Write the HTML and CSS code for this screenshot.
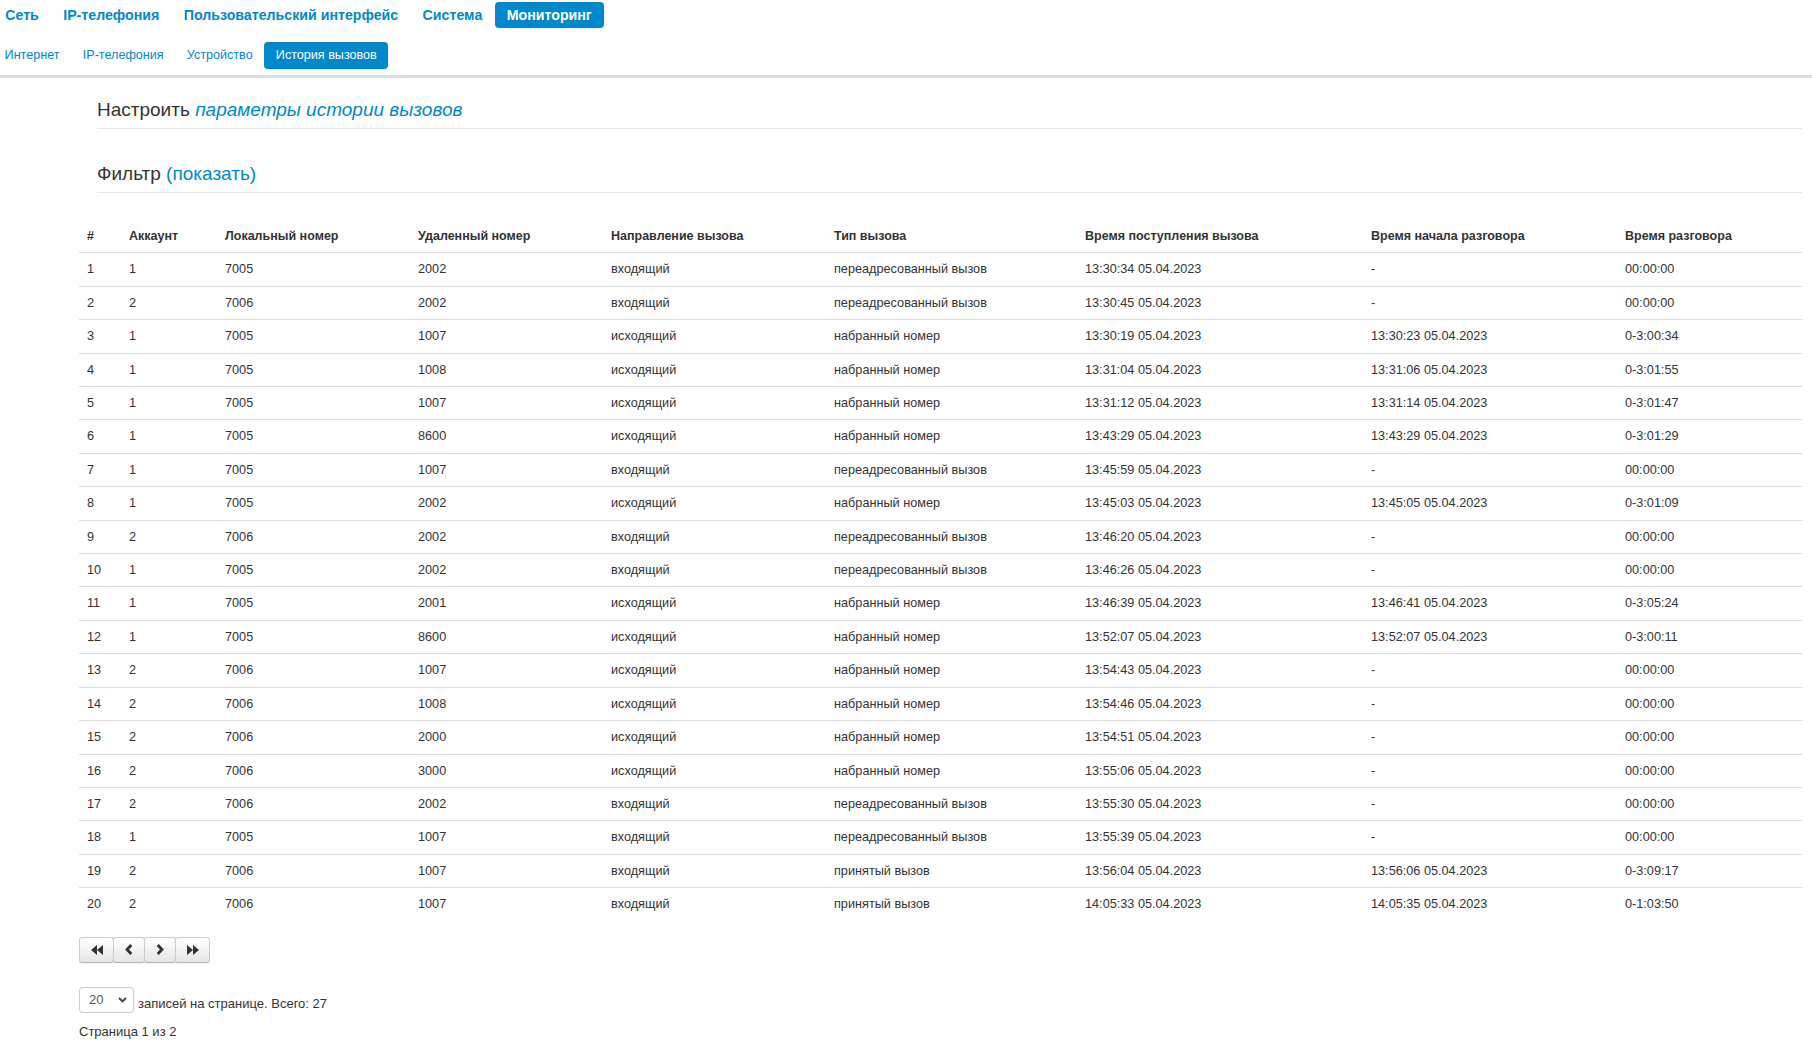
FILE: index.html
```html
<!DOCTYPE html>
<html lang="ru">
<head>
  <meta charset="utf-8" />
  <title>История вызовов</title>
  <link rel="stylesheet" href="styles.css">
</head>
<body>
  <header class="topbar">
    <ul class="nav nav-main">
      <li><a href="#">Сеть</a></li>
      <li><a href="#">IP-телефония</a></li>
      <li><a href="#">Пользовательский интерфейс</a></li>
      <li><a href="#">Система</a></li>
      <li class="active"><a href="#">Мониторинг</a></li>
    </ul>
    <ul class="nav nav-sub">
      <li><a href="#">Интернет</a></li>
      <li><a href="#">IP-телефония</a></li>
      <li><a href="#">Устройство</a></li>
      <li class="active"><a href="#">История вызовов</a></li>
    </ul>
  </header>

  <main class="content">
    <div class="legend">Настроить <a href="#" class="settings-link">параметры истории вызовов</a></div>
    <div class="legend legend-filter">Фильтр <a href="#">(показать)</a></div>

    <table class="calls">
      <colgroup>
        <col style="width:42px"><col style="width:96px"><col style="width:193px">
        <col style="width:193px"><col style="width:223px"><col style="width:251px">
        <col style="width:286px"><col style="width:254px"><col>
      </colgroup>
      <thead>
        <tr>
          <th>#</th><th>Аккаунт</th><th>Локальный номер</th><th>Удаленный номер</th>
          <th>Направление вызова</th><th>Тип вызова</th><th>Время поступления вызова</th>
          <th>Время начала разговора</th><th>Время разговора</th>
        </tr>
      </thead>
      <tbody>
        <tr><td>1</td><td>1</td><td>7005</td><td>2002</td><td>входящий</td><td>переадресованный вызов</td><td>13:30:34 05.04.2023</td><td>-</td><td>00:00:00</td></tr>
        <tr><td>2</td><td>2</td><td>7006</td><td>2002</td><td>входящий</td><td>переадресованный вызов</td><td>13:30:45 05.04.2023</td><td>-</td><td>00:00:00</td></tr>
        <tr><td>3</td><td>1</td><td>7005</td><td>1007</td><td>исходящий</td><td>набранный номер</td><td>13:30:19 05.04.2023</td><td>13:30:23 05.04.2023</td><td>0-3:00:34</td></tr>
        <tr><td>4</td><td>1</td><td>7005</td><td>1008</td><td>исходящий</td><td>набранный номер</td><td>13:31:04 05.04.2023</td><td>13:31:06 05.04.2023</td><td>0-3:01:55</td></tr>
        <tr><td>5</td><td>1</td><td>7005</td><td>1007</td><td>исходящий</td><td>набранный номер</td><td>13:31:12 05.04.2023</td><td>13:31:14 05.04.2023</td><td>0-3:01:47</td></tr>
        <tr><td>6</td><td>1</td><td>7005</td><td>8600</td><td>исходящий</td><td>набранный номер</td><td>13:43:29 05.04.2023</td><td>13:43:29 05.04.2023</td><td>0-3:01:29</td></tr>
        <tr><td>7</td><td>1</td><td>7005</td><td>1007</td><td>входящий</td><td>переадресованный вызов</td><td>13:45:59 05.04.2023</td><td>-</td><td>00:00:00</td></tr>
        <tr><td>8</td><td>1</td><td>7005</td><td>2002</td><td>исходящий</td><td>набранный номер</td><td>13:45:03 05.04.2023</td><td>13:45:05 05.04.2023</td><td>0-3:01:09</td></tr>
        <tr><td>9</td><td>2</td><td>7006</td><td>2002</td><td>входящий</td><td>переадресованный вызов</td><td>13:46:20 05.04.2023</td><td>-</td><td>00:00:00</td></tr>
        <tr><td>10</td><td>1</td><td>7005</td><td>2002</td><td>входящий</td><td>переадресованный вызов</td><td>13:46:26 05.04.2023</td><td>-</td><td>00:00:00</td></tr>
        <tr><td>11</td><td>1</td><td>7005</td><td>2001</td><td>исходящий</td><td>набранный номер</td><td>13:46:39 05.04.2023</td><td>13:46:41 05.04.2023</td><td>0-3:05:24</td></tr>
        <tr><td>12</td><td>1</td><td>7005</td><td>8600</td><td>исходящий</td><td>набранный номер</td><td>13:52:07 05.04.2023</td><td>13:52:07 05.04.2023</td><td>0-3:00:11</td></tr>
        <tr><td>13</td><td>2</td><td>7006</td><td>1007</td><td>исходящий</td><td>набранный номер</td><td>13:54:43 05.04.2023</td><td>-</td><td>00:00:00</td></tr>
        <tr><td>14</td><td>2</td><td>7006</td><td>1008</td><td>исходящий</td><td>набранный номер</td><td>13:54:46 05.04.2023</td><td>-</td><td>00:00:00</td></tr>
        <tr><td>15</td><td>2</td><td>7006</td><td>2000</td><td>исходящий</td><td>набранный номер</td><td>13:54:51 05.04.2023</td><td>-</td><td>00:00:00</td></tr>
        <tr><td>16</td><td>2</td><td>7006</td><td>3000</td><td>исходящий</td><td>набранный номер</td><td>13:55:06 05.04.2023</td><td>-</td><td>00:00:00</td></tr>
        <tr><td>17</td><td>2</td><td>7006</td><td>2002</td><td>входящий</td><td>переадресованный вызов</td><td>13:55:30 05.04.2023</td><td>-</td><td>00:00:00</td></tr>
        <tr><td>18</td><td>1</td><td>7005</td><td>1007</td><td>входящий</td><td>переадресованный вызов</td><td>13:55:39 05.04.2023</td><td>-</td><td>00:00:00</td></tr>
        <tr><td>19</td><td>2</td><td>7006</td><td>1007</td><td>входящий</td><td>принятый вызов</td><td>13:56:04 05.04.2023</td><td>13:56:06 05.04.2023</td><td>0-3:09:17</td></tr>
        <tr><td>20</td><td>2</td><td>7006</td><td>1007</td><td>входящий</td><td>принятый вызов</td><td>14:05:33 05.04.2023</td><td>14:05:35 05.04.2023</td><td>0-1:03:50</td></tr>
      </tbody>
    </table>

    <div class="btn-group" role="group" aria-label="Страницы">
      <button class="btn btn-wide" title="Первая">
        <svg width="12" height="10" viewBox="0 0 12 10"><path d="M6 0 0 5 6 10Z M12 0 6 5 12 10Z" fill="#333"/></svg>
      </button>
      <button class="btn" title="Назад">
        <svg width="8" height="11" viewBox="0 0 8 11"><path d="M6.3 1 2 5.5 6.3 10" fill="none" stroke="#333" stroke-width="2.8"/></svg>
      </button>
      <button class="btn" title="Вперёд">
        <svg width="8" height="11" viewBox="0 0 8 11"><path d="M1.7 1 6 5.5 1.7 10" fill="none" stroke="#333" stroke-width="2.8"/></svg>
      </button>
      <button class="btn btn-wide" title="Последняя">
        <svg width="12" height="10" viewBox="0 0 12 10"><path d="M0 0 6 5 0 10Z M6 0 12 5 6 10Z" fill="#333"/></svg>
      </button>
    </div>

    <div class="page-size">
      <div class="select-wrap">
        <select class="select">
          <option selected>20</option>
          <option>50</option>
          <option>100</option>
        </select>
        <svg class="select-arrow" width="9" height="6" viewBox="0 0 9 6"><path d="M1 1 4.5 4.5 8 1" fill="none" stroke="#444" stroke-width="1.9"/></svg>
      </div>
      <span>записей на странице. Всего: 27</span>
    </div>
    <div class="page-info">Страница 1 из 2</div>
  </main>
</body>
</html>
```

FILE: styles.css
```css
* { box-sizing: border-box; }
html, body {
  margin: 0;
  background: #fff;
  color: #333;
  font-family: "Liberation Sans", Arial, Helvetica, sans-serif;
  font-size: 13px;
}
a { color: #0088cc; text-decoration: none; }

/* top navigation */
.topbar {
  padding-top: 2px;
  border-bottom: 3px solid #ddd;
}
.nav { list-style: none; margin: 0; padding: 0; display: flex; }
.nav a { display: block; border-radius: 4px; white-space: nowrap; }
.nav .active a { background: #0088cc; color: #fff; }

.nav-main { margin-left: -7px; height: 26px; }
.nav-main a { font-size: 14.2px; font-weight: bold; line-height: 26px; padding: 0 12.2px; }

.nav-sub { margin: 14px 0 6px -7px; height: 27px; }
.nav-sub a { font-size: 12.6px; line-height: 27px; padding: 0 11.6px; }

/* page content */
.content { padding: 13px 10px 0 79px; }
.legend {
  margin: 0 0 26px 18px;
  font-size: 19px;
  line-height: 37px;
  border-bottom: 1px solid #e5e5e5;
}
.legend-filter { margin-bottom: 27px; }
.settings-link { font-style: italic; }

.calls {
  width: 100%;
  table-layout: fixed;
  border-collapse: collapse;
  font-size: 12.7px;
}
.calls th, .calls td {
  text-align: left;
  padding: 8px;
  line-height: 16.4px;
  white-space: nowrap;
  vertical-align: top;
}
.calls th { font-weight: bold; font-size: 12.5px; }
.calls td { border-top: 1px solid #ddd; }

.btn-group { display: flex; margin-top: 16px; }
.btn {
  display: flex; align-items: center; justify-content: center;
  width: 32px; height: 26px;
  padding: 0; margin: 0;
  background: linear-gradient(#fff, #e6e6e6);
  border: 1px solid #ccc;
  border-bottom-color: #b3b3b3;
  border-radius: 3px;
  box-shadow: inset 0 1px 0 rgba(255,255,255,.2), 0 1px 2px rgba(0,0,0,.05);
  cursor: pointer;
}
.btn + .btn { margin-left: -1px; }
.btn-wide { width: 35px; }

.page-size {
  display: flex;
  align-items: flex-end;
  gap: 4px;
  margin-top: 24px;
  line-height: 18px;
}
.select-wrap { position: relative; width: 55px; height: 26px; }
.select {
  appearance: none;
  width: 100%; height: 100%;
  margin: 0;
  padding: 0 0 0 9px;
  font: inherit;
  font-size: 13px;
  color: #555;
  background: #fff;
  border: 1px solid #ccc;
  border-radius: 4px;
}
.select-arrow { position: absolute; right: 7px; top: 10px; pointer-events: none; }

.page-info { margin-top: 10px; line-height: 18px; }
```
